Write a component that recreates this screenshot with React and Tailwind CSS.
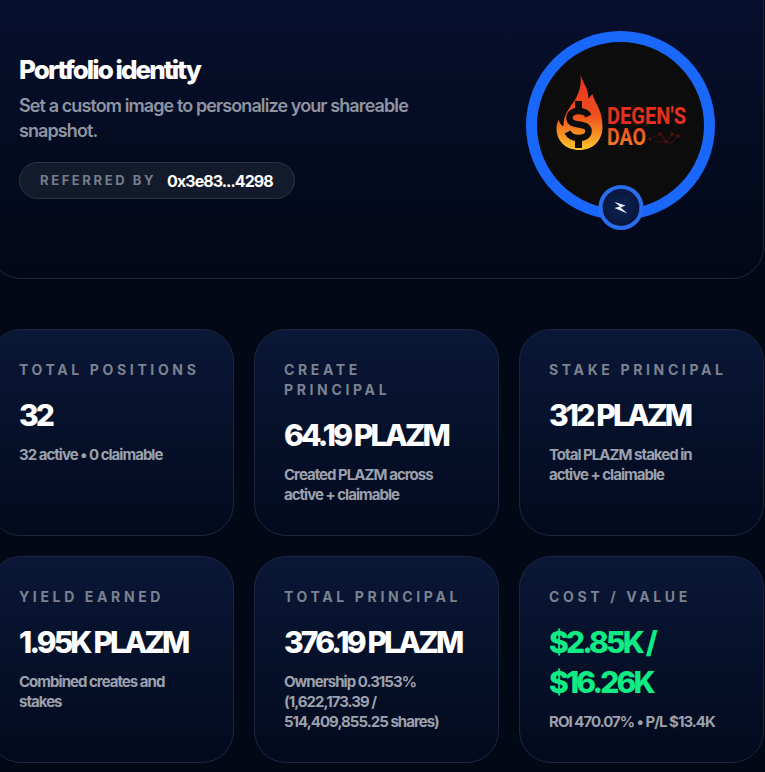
function Stat({ label, value, sub, green }) {
  return (
    <div className="h-[207px] rounded-[32px] border border-[#1c2640] bg-gradient-to-b from-[#0a1736] to-[#030a1e] px-[29px] pt-[30px]">
      <div className="text-[14px] leading-[20px] font-bold tracking-[0.26em] text-[#7b8290]">{label}</div>
      <div className={`mt-[15px] text-[30px] leading-[40px] font-extrabold tracking-[-0.095em] ${green ? "text-[#10eb84]" : "text-white"}`}>{value}</div>
      <div className="mt-[10px] w-[175px] text-[15px] leading-[20px] font-bold tracking-[-0.065em] text-[#9ca1ad]">{sub}</div>
    </div>
  );
}

function Logo() {
  return (
    <svg viewBox="0 0 136 76" className="w-[136px] h-[76px] overflow-visible">
      <defs>
        <linearGradient id="fl" x1="0" y1="0" x2="0" y2="1">
          <stop offset="0" stopColor="#e5301f" />
          <stop offset="0.55" stopColor="#f0521e" />
          <stop offset="1" stopColor="#fdc82a" />
        </linearGradient>
        <linearGradient id="dao" x1="0" y1="0" x2="0" y2="1">
          <stop offset="0" stopColor="#ea3d20" />
          <stop offset="1" stopColor="#f58a24" />
        </linearGradient>
      </defs>
      <g transform="translate(1.500 -1)">
        <path d="M25 0C28 9 33 13 33 24C35 21 36 20 37 19C39 28 47 34 47 52C47 66 37 75 24 75C10 75 1 66 1 53C1 50 2 47 3 45C5 49 6 51 8 51C8 38 14 34 20 24C24 17 26 9 25 0Z" fill="url(#fl)" />
        <path d="M33 41C31 37 28 36 23 36C18 36 14 38 14 43C14 53 33 46 33 56C33 61 28 63 23 63C18 63 14 61 12 57" fill="none" stroke="#0c0c0c" strokeWidth="6.500" />
        <rect x="19.500" y="26" width="7" height="9" fill="#0c0c0c" />
        <rect x="19.500" y="63" width="7" height="10" fill="#0c0c0c" />
      </g>
      <text x="53" y="48" fontFamily="Roboto, sans-serif" fontWeight="700" fontSize="24" fill="#e5301f" textLength="79" lengthAdjust="spacingAndGlyphs">DEGEN'S</text>
      <text x="53" y="69" fontFamily="Roboto, sans-serif" fontWeight="700" fontSize="24" fill="url(#dao)" textLength="39" lengthAdjust="spacingAndGlyphs">DAO</text>
      <g stroke="#4a1310" strokeWidth="0.8" fill="#5a1512">
        <path d="M96 63L106 58L112 66L118 58L124 60L116 68L106 58M100 66L112 66" fill="none" />
        <circle cx="96" cy="63" r="1.300" />
        <circle cx="106" cy="58" r="1.300" />
        <circle cx="112" cy="66" r="1.300" />
        <circle cx="118" cy="58" r="1.300" />
        <circle cx="124" cy="60" r="1.300" />
      </g>
    </svg>
  );
}

function Avatar() {
  return (
    <div className="relative w-[189px] h-[189px] rounded-full border-[11px] border-[#1a68fb] bg-[#0c0c0c] flex items-center justify-center">
      <div className="translate-x-[1px] translate-y-[-12px]"><Logo /></div>
      <div className="absolute left-1/2 -translate-x-1/2 bottom-[-21px] w-[45px] h-[45px] rounded-full border-[4px] border-[#2a6cf0] bg-[radial-gradient(circle,#0d2354_0%,#071233_100%)] flex items-center justify-center">
        <svg viewBox="0 0 14 12" className="w-[14px] h-[12px]">
          <path d="M1 0L12 3.500L7 5.500L14 11.500L1 6L6.500 4.500Z" fill="#f3f6ff" />
        </svg>
      </div>
    </div>
  );
}

export default function App() {
  return (
    <div className="w-[765px] h-[772px] overflow-hidden bg-[#030817] font-['Inter','Liberation_Sans',sans-serif]">
      <div className="ml-[-11px] w-[775px]">
        <section className="h-[309px] mt-[-30px] pt-[60px] rounded-[32px] border border-[#1c2640] bg-gradient-to-b from-[#071030] to-[#030817] flex justify-between pl-[29px] pr-[48px]">
          <div className="w-[400px] pt-[21px]">
            <h2 className="text-[26px] leading-[36px] font-extrabold tracking-[-0.075em] text-white">Portfolio identity</h2>
            <p className="mt-[5px] text-[18px] leading-[25px] font-semibold tracking-[-0.05em] text-[#8f94a1]">Set a custom image to personalize your shareable snapshot.</p>
            <div className="mt-[19px] w-[276px] h-[37px] rounded-full border border-[#2c3344] bg-[#131a2c] flex items-center pl-[20px] gap-[11px]">
              <span className="text-[13px] font-bold tracking-[0.2em] text-[#767d8b]">REFERRED BY</span>
              <span className="text-[16px] font-bold tracking-[-0.06em] text-white">0x3e83...4298</span>
            </div>
          </div>
          <div><Avatar /></div>
        </section>
        <div className="mt-[50px] grid grid-cols-3 gap-[20px]">
          <Stat label="TOTAL POSITIONS" value="32" sub="32 active • 0 claimable" />
          <Stat label="CREATE PRINCIPAL" value="64.19 PLAZM" sub="Created PLAZM across active + claimable" />
          <Stat label="STAKE PRINCIPAL" value="312 PLAZM" sub="Total PLAZM staked in active + claimable" />
          <Stat label="YIELD EARNED" value="1.95K PLAZM" sub="Combined creates and stakes" />
          <Stat label="TOTAL PRINCIPAL" value="376.19 PLAZM" sub="Ownership 0.3153% (1,622,173.39 / 514,409,855.25 shares)" />
          <Stat label="COST / VALUE" value="$2.85K / $16.26K" sub="ROI 470.07% • P/L $13.4K" green />
        </div>
      </div>
    </div>
  );
}
